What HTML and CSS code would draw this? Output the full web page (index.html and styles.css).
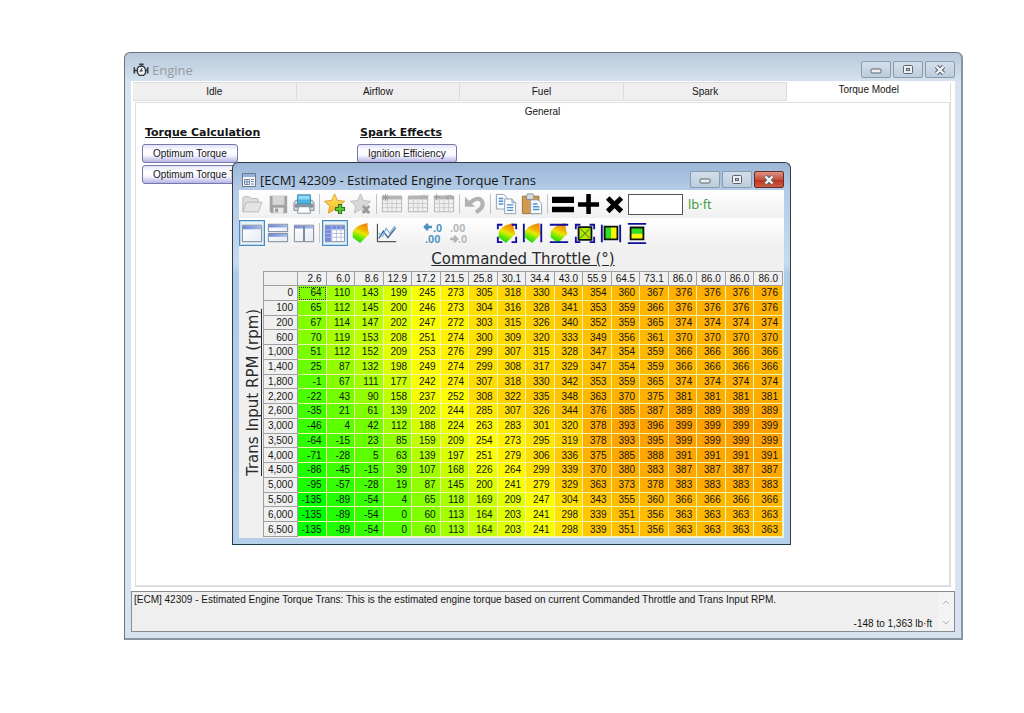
FILE: index.html
```html
<!DOCTYPE html>
<html lang="en">
<head>
<meta charset="utf-8">
<title>Engine</title>
<link rel="stylesheet" href="styles.css">
</head>
<body>
<svg class="defs" width="0" height="0" aria-hidden="true">
  <defs>
    <linearGradient id="heat" x1="0.7" y1="0" x2="0.35" y2="1">
      <stop offset="0" stop-color="#f08010"/><stop offset=".3" stop-color="#f0b000"/><stop offset=".5" stop-color="#e8e800"/><stop offset=".75" stop-color="#60e800"/><stop offset="1" stop-color="#18d020"/>
    </linearGradient>
    <linearGradient id="gold" x1="0" y1="0" x2="0" y2="1"><stop offset="0" stop-color="#ffe860"/><stop offset="1" stop-color="#f8b020"/></linearGradient>
    <linearGradient id="bar" x1="0" y1="0" x2="1" y2="0"><stop offset="0" stop-color="#7088d8"/><stop offset="1" stop-color="#a8bce8"/></linearGradient>
    <linearGradient id="pane" x1="0" y1="0" x2="1" y2="1"><stop offset="0" stop-color="#fff"/><stop offset="1" stop-color="#e8eaf4"/></linearGradient>
    <symbol id="grid" viewBox="0 0 24 24">
      <path d="M1.500 3.500h21v17h-21z" fill="#f0f0f0" stroke="#b0b0b0"/><path d="M1 3h22v4H1z" fill="#b4b4b4"/>
      <path d="M2 11.500h20M2 16h20M7 7v13M12 7v13M17 7v13" stroke="#c8c8c8"/>
    </symbol>
    <symbol id="minimize" viewBox="0 0 14 10"><rect x="2" y="4" width="10" height="4" rx="1" fill="#eee" stroke="#5b6470"/></symbol>
    <symbol id="maximize" viewBox="0 0 14 10"><rect x="2.500" y=".5" width="9" height="8" rx="1" fill="#eee" stroke="#5b6470"/><rect x="5.500" y="3.500" width="3" height="2" fill="#ccd" stroke="#5b6470"/></symbol>
    <symbol id="close" viewBox="0 0 14 10"><path d="M3.500 1.500l7 7M10.500 1.500l-7 7" stroke="#5b6470" stroke-width="4.400"/><path d="M3.500 1.500l7 7M10.500 1.500l-7 7" stroke="#f4f4f4" stroke-width="2.400"/></symbol>
    <symbol id="surface" viewBox="0 0 24 24"><path d="M3 11Q6 5 12 3L19 1Q19 8 21 13L14 20 11 23 3 17z" fill="url(#heat)"/></symbol>
  </defs>
</svg>

<main class="window engine">
  <header class="titlebar">
    <svg class="title-icon" viewBox="0 0 18 16" fill="none" stroke="#333b45"><path d="M1.500 5v7M1.500 8.500h3M16.500 5v7M14 8.500h2M7 1.500h5M9.500 2v2" stroke-width="1.800"/><path d="M5 6l2-2h5l2 3v5l-2 2H7l-2-3z" fill="#f5f5f5" stroke-width="1.500"/><path d="M10.500 6L8 9h3" stroke-width="1.200"/></svg>
    <h1 class="title">Engine</h1>
    <div class="controls">
      <button class="control" aria-label="Minimize"><svg><use href="#minimize"/></svg></button>
      <button class="control" aria-label="Maximize"><svg><use href="#maximize"/></svg></button>
      <button class="control" aria-label="Close"><svg><use href="#close"/></svg></button>
    </div>
  </header>
  <div class="engine-body">
    <nav class="tabs">
      <button class="tab">Idle</button>
      <button class="tab">Airflow</button>
      <button class="tab">Fuel</button>
      <button class="tab">Spark</button>
      <button class="tab selected">Torque Model</button>
    </nav>
    <section class="panel">
      <h2 class="general">General</h2>
      <div class="groups">
        <div class="group">
          <h3 class="group-title">Torque Calculation</h3>
          <button class="action">Optimum Torque</button>
          <button class="action">Optimum Torque T</button>
        </div>
        <div class="group">
          <h3 class="group-title">Spark Effects</h3>
          <button class="action">Ignition Efficiency</button>
        </div>
      </div>
    </section>
  </div>
  <footer class="status">
    <div class="status-text">
      <p class="description">[ECM] 42309 - Estimated Engine Torque Trans: This is the estimated engine torque based on current Commanded Throttle and Trans Input RPM.</p>
      <p class="range">-148 to 1,363 lb·ft</p>
    </div>
    <div class="scroller">
      <button class="scroll" aria-label="Scroll up"><svg viewBox="0 0 8 6"><path d="M1 5l3-3 3 3"/></svg></button>
      <button class="scroll" aria-label="Scroll down"><svg viewBox="0 0 8 6"><path d="M1 1l3 3 3-3"/></svg></button>
    </div>
  </footer>

  <section class="window editor">
    <header class="titlebar">
      <svg class="title-icon" viewBox="0 0 16 16"><path d="M1.500 1.500h13v13h-13z" fill="#f7f7f7" stroke="#6c7886"/><path d="M2 2h12v3H2z" fill="#8fb4e0"/><path d="M3.500 7.500h5v5h-5zM10 7.500h3M10 9.500h3M4 10h4M6 8v4M10 12h3" fill="none" stroke="#7088b0"/></svg>
      <h2 class="title">[ECM] 42309 - Estimated Engine Torque Trans</h2>
      <div class="controls">
        <button class="control" aria-label="Minimize"><svg><use href="#minimize"/></svg></button>
        <button class="control" aria-label="Maximize"><svg><use href="#maximize"/></svg></button>
        <button class="control close" aria-label="Close"><svg><use href="#close"/></svg></button>
      </div>
    </header>
    <div class="client">
      <div class="toolbar">
        <button class="tool" aria-label="Open"><svg viewBox="0 0 24 24"><path d="M2 20V5l1-1h6l2 2h7l1 2v3" fill="#ddd" stroke="#b8b8b8"/><path d="M2 20.500L6 10h17l-4 10.500z" fill="#e4e4e4" stroke="#b8b8b8"/></svg></button>
        <button class="tool" aria-label="Save"><svg viewBox="0 0 24 24"><path d="M3 3h19v19H5l-2-2z" fill="#a2a2a2"/><path d="M6 3h13v10H6z" fill="#d6d6d6"/><path d="M7 16h11v6H7z" fill="#e6e6e6"/><path d="M9 17h3v4H9z" fill="#999"/></svg></button>
        <button class="tool" aria-label="Print"><svg viewBox="0 0 24 24"><path d="M3 8h18l2 3v8H1v-8z" fill="#d4d9dd" stroke="#7c8890"/><path d="M5 2h14v10H5z" fill="#4bb4e6" stroke="#3684a8"/><path d="M6 3h12v4H6z" fill="#8edafa"/><path d="M2 12h20v4H2z" fill="#88939b"/><path d="M6 15h12l1 7H5z" fill="#fff" stroke="#7890a0"/></svg></button>
        <span class="separator"></span>
        <button class="tool" aria-label="Add favorite"><svg viewBox="0 0 24 24"><path d="M11.500 1l3.200 7.200 7.800.8-5.800 5.300 1.600 7.700-6.800-4-6.800 4 1.600-7.700L.5 9l7.800-.8z" fill="url(#gold)" stroke="#d99a20"/><path d="M17.500 12v11M12 17.500h11" stroke="#28701c" stroke-width="4.500"/><path d="M17.500 13v9M13 17.500h9" stroke="#58c83a" stroke-width="2.500"/></svg></button>
        <button class="tool" aria-label="Remove favorite"><svg viewBox="0 0 24 24"><path d="M11.500 1l3.200 7.200 7.800.8-5.800 5.300 1.600 7.700-6.800-4-6.800 4 1.600-7.700L.5 9l7.800-.8z" fill="#d8d8d8" stroke="#bbb"/><path d="M14 14l7 8M21 14l-7 8" stroke="#999" stroke-width="3"/></svg></button>
        <span class="separator"></span>
        <button class="tool" aria-label="Table origin"><svg viewBox="0 0 24 24"><use href="#grid"/><path d="M5 1v8M1 5h8M2 2l6 6M8 2L2 8" stroke="#999"/></svg></button>
        <button class="tool" aria-label="Column labels"><svg viewBox="0 0 24 24"><use href="#grid"/><path d="M14 2l3 5M18 2l-3 5M19 2l3 5M23 2l-3 5" stroke="#aaa"/></svg></button>
        <button class="tool" aria-label="Row labels"><svg viewBox="0 0 24 24"><use href="#grid"/><path d="M4 1v7M1 4h7M14 2l3 5M18 2l-3 5M19 2l3 5" stroke="#999"/></svg></button>
        <span class="separator"></span>
        <button class="tool" aria-label="Undo"><svg viewBox="0 0 24 24"><path d="M6 11Q17 2 20 10Q22 16 13 21" fill="none" stroke="#b2b2b2" stroke-width="4.500"/><path d="M1 4v11h11z" fill="#b2b2b2"/></svg></button>
        <span class="separator"></span>
        <button class="tool" aria-label="Copy"><svg viewBox="0 0 24 24"><g fill="#f8fbff" stroke="#8c9aa8"><path d="M1.500 1.500h8l4 4v12h-12z"/><path d="M10.500 6.500h8l4 4v12h-12z"/></g><path d="M18.500 6.500v4h4" fill="#cde" stroke="#8c9aa8"/><path d="M4 6h5M4 9h5M4 12h5M13 13h7M13 16h7M13 19h7" stroke="#4d90d0" stroke-width="1.500"/></svg></button>
        <button class="tool" aria-label="Paste"><svg viewBox="0 0 24 24"><path d="M1.500 3.500h18v19h-18z" fill="#d29a50" stroke="#9c6c30"/><path d="M6 4l1-3h6l1 3v3H6z" fill="#d8dce0" stroke="#888"/><path d="M10.500 7.500h8l4 4v11h-12z" fill="#f8fbff" stroke="#8c9aa8"/><path d="M13 12h5M13 15h7M13 18h7" stroke="#4d90d0" stroke-width="1.500"/></svg></button>
        <span class="separator"></span>
        <button class="tool" aria-label="Set value"><svg viewBox="0 0 24 24"><path d="M0 4h24v7H0zM0 15h24v6H0z"/></svg></button>
        <button class="tool" aria-label="Add value"><svg viewBox="0 0 24 24"><path d="M9 1h5v9h9v5h-9v8H9v-8H0v-5h9z"/></svg></button>
        <button class="tool" aria-label="Multiply value"><svg viewBox="0 0 24 24"><path d="M4 5.500L19 20M19 5.500L4 20" stroke="#000" stroke-width="5.500"/></svg></button>
        <input class="value" type="text" id="amount">
        <label class="unit" for="amount">lb·ft</label>
      </div>
      <div class="toolbar second">
        <button class="tool chosen" aria-label="Single pane"><svg viewBox="0 0 24 24"><path d="M1.500 3.500h21v18h-21z" fill="url(#pane)" stroke="#707e90"/><path d="M2 4h20v4H2z" fill="url(#bar)"/></svg></button>
        <button class="tool" aria-label="Split horizontally"><svg viewBox="0 0 24 24"><path d="M1.500 2.500h21v8h-21zM1.500 12.500h21v9h-21z" fill="url(#pane)" stroke="#707e90"/><path d="M2 3h20v3H2zM2 13h20v3H2z" fill="url(#bar)"/></svg></button>
        <button class="tool" aria-label="Split vertically"><svg viewBox="0 0 24 24"><path d="M1.500 3.500h10v18h-10zM12.500 3.500h10v18h-10z" fill="url(#pane)" stroke="#707e90"/><path d="M2 4h9v3H2zM13 4h9v3h-9z" fill="url(#bar)"/></svg></button>
        <span class="separator"></span>
        <button class="tool chosen" aria-label="Table view"><svg viewBox="0 0 24 24"><path d="M1.500 3.500h21v18h-21z" fill="#fff" stroke="#707e90"/><path d="M2 4h20v4H2zM2 8h6v13H2z" fill="#7688e0"/><path d="M2 8.500h20M2 12.500h20M2 16.500h20M8.500 4v17M13.500 4v17M18.500 4v17" stroke="#b4bbe0"/></svg></button>
        <button class="tool" aria-label="Surface view"><svg><use href="#surface"/></svg></button>
        <button class="tool" aria-label="Graph view"><svg viewBox="0 0 24 24" fill="none"><path d="M1.500 2v19.500H22" stroke="#222"/><path d="M3 18l5-8 5 7 8-10" stroke="#3b5f90" stroke-width="1.500"/><path d="M3 12l4 4 4-9 4 5 5-7 2 2" stroke="#78aed8" stroke-width="1.200"/></svg></button>
        <span class="spacer"></span>
        <button class="tool decimals" aria-label="Fewer decimals"><svg viewBox="0 0 24 24"><path d="M3 6h7M6 3L3 6l3 3" fill="none" stroke="#4a90c0" stroke-width="2.500"/><text x="11" y="11">.0</text><text x="3" y="22">.00</text></svg></button>
        <button class="tool decimals muted" aria-label="More decimals"><svg viewBox="0 0 24 24"><text x="2" y="11">.00</text><path d="M2 18h7M6 15l3 3-3 3" fill="none" stroke="#b4b4b4" stroke-width="2.500"/><text x="10" y="22">.0</text></svg></button>
        <span class="spacer"></span>
        <button class="tool" aria-label="Smooth selection"><svg viewBox="0 0 24 24"><use href="#surface"/><path d="M2 8V3h5M17 3h5v5M2 16v6h5M17 22h5v-6" fill="none" stroke="#1010a0" stroke-width="2"/></svg></button>
        <button class="tool" aria-label="Smooth rows"><svg viewBox="0 0 24 24"><use href="#surface"/><path d="M2 2v20M21 2v20" stroke="#1010a0" stroke-width="2"/></svg></button>
        <button class="tool" aria-label="Smooth columns"><svg viewBox="0 0 24 24"><use href="#surface"/><path d="M2 3h20M2 22h20" stroke="#1010a0" stroke-width="2"/></svg></button>
        <button class="tool" aria-label="Interpolate selection"><svg viewBox="0 0 24 24"><path d="M2 8V3h5M17 3h5v5M2 16v6h5M17 22h5v-6" fill="none" stroke="#1010a0" stroke-width="2"/><path d="M5 5.500h14v14H5z" fill="#a8f000" stroke="#111" stroke-width="2"/><path d="M7 7.500l10 10" stroke="#b02020"/><path d="M17 7.500l-10 10" stroke="#186018"/></svg></button>
        <button class="tool" aria-label="Interpolate across"><svg viewBox="0 0 24 24"><path d="M2 3v19M22 3v19" stroke="#1010a0" stroke-width="2"/><path d="M5 5h7v14H5z" fill="#30e020"/><path d="M12 5h7v14h-7z" fill="#f8f800"/><path d="M5 5h14v14H5z" fill="none" stroke="#111" stroke-width="2"/></svg></button>
        <button class="tool" aria-label="Interpolate down"><svg viewBox="0 0 24 24"><path d="M2 2h20M2 23h20" stroke="#1010a0" stroke-width="2"/><path d="M5 6h14v7H5z" fill="#30e020"/><path d="M5 13h14v6H5z" fill="#f8f800"/><path d="M5 6h14v13H5z" fill="none" stroke="#111" stroke-width="2"/></svg></button>
      </div>
      <div class="chart">
        <h3 class="axis across">Commanded Throttle (°)</h3>
        <h3 class="axis down">Trans Input RPM (rpm)</h3>
        <table class="torque">
          <thead id="throttle"></thead>
          <tbody id="values"></tbody>
        </table>
      </div>
    </div>
  </section>
</main>
<script src="table.js"></script>
</body>
</html>
```

FILE: styles.css
```css
* { box-sizing: border-box; }
body {
  margin: 0;
  min-height: 100vh;
  padding: 52px 61px 73px 124px;
  display: flex;
  background: #fff;
  color: #151515;
  font: 10px/14px "Liberation Sans", Arial, sans-serif;
}
h1, h2, h3, p { margin: 0; font-weight: normal; }
button { font: inherit; color: inherit; padding: 0; border: 0; background: none; }
.defs { position: absolute; }

.window { display: flex; flex-direction: column; border: 1px solid #69747f; border-radius: 6px 6px 0 0; }
.engine {
  position: relative;
  flex: 1;
  padding: 0 6px 6px;
  background: linear-gradient(#b8c9db, #d7e3ef 30px);
  border-bottom: 2px solid #8894a2;
  border-right: 2px solid #8894a2;
}
.titlebar { display: flex; align-items: center; height: 28px; padding-left: 2px; }
.engine > .titlebar { padding-top: 5px; }
.title { flex: 1; font: 13px/18px "Open Sans", sans-serif; }
.title-icon { width: 16px; height: 16px; margin-right: 3px; }
.engine > .titlebar .title { color: #969ca3; }
.controls { display: flex; gap: 2px; }
.control {
  width: 30px;
  height: 17px;
  display: flex;
  align-items: center;
  justify-content: center;
  border: 1px solid #8b9bac;
  border-radius: 2px;
  background: linear-gradient(#d3dfeb, #bccddd);
}
.control svg { width: 14px; height: 10px; }
.close { background: linear-gradient(#dc9485, #c4503c 50%, #b8321d 51%, #cc5c40); border-color: #6b2a28; }

.engine-body { flex: 1; display: flex; flex-direction: column; padding: 1px 4px 4px 2px; background: #fff; }
.tabs { display: flex; height: 19px; }
.tab { flex: 1; background: #efefef; border: solid #dcdcdc; border-width: 1px 1px 1px 0; }
.tab.selected { background: #fff; border-color: #fff #dcdcdc #fff #fff; padding-bottom: 3px; }
.panel { flex: 1; margin: 1px 0 0 2px; border: 1px solid #dedede; border-width: 1px 2px 2px 1px; }
.general { text-align: center; padding-top: 2px; font-size: 10px; }
.groups { display: flex; padding: 5px 6px; }
.group { width: 215px; display: flex; flex-direction: column; align-items: flex-start; gap: 2px; }
.group-title { font: bold 11px/18px "DejaVu Sans", sans-serif; text-decoration: underline; padding: 0 3px; }
.action {
  min-width: 93px;
  height: 19px;
  padding: 0 10px;
  border: 1px solid #7878a8;
  border-radius: 3px;
  background: linear-gradient(#e4e4fa, #fff 35%, #f8f8ff 60%, #b4b4e8);
  white-space: nowrap;
}

.status { display: flex; border: 1px solid #858c94; background: #efefef; height: 41px; }
.status-text { flex: 1; display: flex; flex-direction: column; justify-content: space-between; padding: 1px 6px 0 2px; }
.range { text-align: right; }
.scroller { display: flex; flex-direction: column; justify-content: space-between; width: 16px; padding: 3px 0; background: #f3f3f3; }
.scroll { height: 12px; }
.scroll svg { width: 8px; height: 6px; fill: none; stroke: #b4b4b4; stroke-width: 1; }

/* The table editor floats over the engine window. */
.editor {
  position: absolute;
  left: 107px;
  top: 109px;
  width: 559px;
  padding: 0 6px 6px;
  border: 1px solid #323c48;
  border-bottom-color: #1f3d50;
  background: linear-gradient(#9bb6d6, #b4cce8 28px, #c6daee 100px, #aecbe8 111px, #b4d0ea);
}
.editor .titlebar { height: 27px; padding-top: 6px; }
.editor .title-icon { margin-right: 3px; }
.client { background: #f0f0f0; }
.toolbar { display: flex; align-items: center; height: 28px; background: linear-gradient(#fff, #f0f0f0); }
.second { height: 29px; }
.tool { width: 26px; height: 26px; display: flex; align-items: center; justify-content: center; }
.tool svg { width: 22px; height: 22px; }
.chosen { border: 1px solid #4a8ac0; outline: 1px solid #b8d8ec; outline-offset: -2px; background: #e8f3fa; }
.separator { width: 1px; height: 20px; margin: 0 2px; background: #c4c4c4; }
.spacer { width: 21px; }
.decimals svg { width: 24px; height: 24px; font: bold 11px "Liberation Sans", sans-serif; fill: #4a90c0; }
.decimals.muted svg { fill: #b4b4b4; }
.value { width: 55px; height: 21px; border: 1px solid #555; background: #fff; padding: 0 2px; }
.unit { margin-left: 5px; color: #3a963a; font: 13px/18px "Open Sans", sans-serif; }

.chart { display: grid; grid-template-columns: 24px 1fr; padding: 0 1px 1px 0; }
.axis { font: 15px/24px "DejaVu Sans", sans-serif; color: #2a2a2a; text-decoration: underline; }
.across { grid-area: 1 / 2; text-align: center; }
.down {
  grid-area: 1 / 1 / 3 / 2;
  justify-self: end;
  writing-mode: vertical-rl;
  transform: rotate(180deg);
  text-align: center;
  line-height: 20px;
  white-space: nowrap;
}
.torque {
  grid-area: 2 / 2;
  width: 100%;
  height: 266px;
  table-layout: fixed;
  border-collapse: separate;
  border-spacing: 0;
  border: solid #a0a0a0;
  border-width: 1px 0 0 1px;
  line-height: 12px;
}
.torque th, .torque td { padding: 1px 4px 0 0; text-align: right; font-weight: normal; white-space: nowrap; }
.torque th { background: #f0f0f0; border: solid #a0a0a0; border-width: 0 1px 1px 0; }
.torque th:first-child { width: 34px; }
.torque td { border: solid #f3f3b0; border-width: 0 1px 1px 0; }
.torque .focused { outline: 1px dotted #333; outline-offset: -2px; }
```

FILE: table.js
```javascript
const throttle = ["2.6", "6.0", "8.6", "12.9", "17.2", "21.5", "25.8", "30.1", "34.4", "43.0", "55.9", "64.5", "73.1", "86.0", "86.0", "86.0", "86.0"];
const rpm = ["0", "100", "200", "600", "1,000", "1,400", "1,800", "2,200", "2,600", "3,000", "3,500", "4,000", "4,500", "5,000", "5,500", "6,000", "6,500"];
const torque = [
  [64, 110, 143, 199, 245, 273, 305, 318, 330, 343, 354, 360, 367, 376, 376, 376, 376],
  [65, 112, 145, 200, 246, 273, 304, 316, 328, 341, 353, 359, 366, 376, 376, 376, 376],
  [67, 114, 147, 202, 247, 272, 303, 315, 326, 340, 352, 359, 365, 374, 374, 374, 374],
  [70, 119, 153, 208, 251, 274, 300, 309, 320, 333, 349, 356, 361, 370, 370, 370, 370],
  [51, 112, 152, 209, 253, 276, 299, 307, 315, 328, 347, 354, 359, 366, 366, 366, 366],
  [25, 87, 132, 198, 249, 274, 299, 308, 317, 329, 347, 354, 359, 366, 366, 366, 366],
  [-1, 67, 111, 177, 242, 274, 307, 318, 330, 342, 353, 359, 365, 374, 374, 374, 374],
  [-22, 43, 90, 158, 237, 252, 308, 322, 335, 348, 363, 370, 375, 381, 381, 381, 381],
  [-35, 21, 61, 139, 202, 244, 285, 307, 326, 344, 376, 385, 387, 389, 389, 389, 389],
  [-46, 4, 42, 112, 188, 224, 263, 283, 301, 320, 378, 393, 396, 399, 399, 399, 399],
  [-64, -15, 23, 85, 159, 209, 254, 273, 295, 319, 378, 393, 395, 399, 399, 399, 399],
  [-71, -28, 5, 63, 139, 197, 251, 279, 306, 336, 375, 385, 388, 391, 391, 391, 391],
  [-86, -45, -15, 39, 107, 168, 226, 264, 299, 339, 370, 380, 383, 387, 387, 387, 387],
  [-95, -57, -28, 19, 87, 145, 200, 241, 279, 329, 363, 373, 378, 383, 383, 383, 383],
  [-135, -89, -54, 4, 65, 118, 169, 209, 247, 304, 343, 355, 360, 366, 366, 366, 366],
  [-135, -89, -54, 0, 60, 113, 164, 203, 241, 298, 339, 351, 356, 363, 363, 363, 363],
  [-135, -89, -54, 0, 60, 113, 164, 203, 241, 298, 339, 351, 356, 363, 363, 363, 363]
];

// Green at the lowest torque, yellow in the middle, orange at the top.
function heat(value) {
  const red = Math.min(255, Math.round((value + 135) * 255 / 390));
  const green = value > 255 ? Math.round(255 - (value - 255) * 0.66) : 255;
  return `rgb(${red}, ${green}, 0)`;
}

function cell(row, tag, text) {
  const element = document.createElement(tag);
  element.textContent = text;
  row.append(element);
  return element;
}

const head = document.getElementById("throttle").insertRow();
cell(head, "th", "");
throttle.forEach(label => { cell(head, "th", label).scope = "col"; });

const body = document.getElementById("values");
torque.forEach((values, index) => {
  const row = body.insertRow();
  cell(row, "th", rpm[index]).scope = "row";
  values.forEach(value => { cell(row, "td", value).style.backgroundColor = heat(value); });
});
body.querySelector("td").className = "focused";
```
